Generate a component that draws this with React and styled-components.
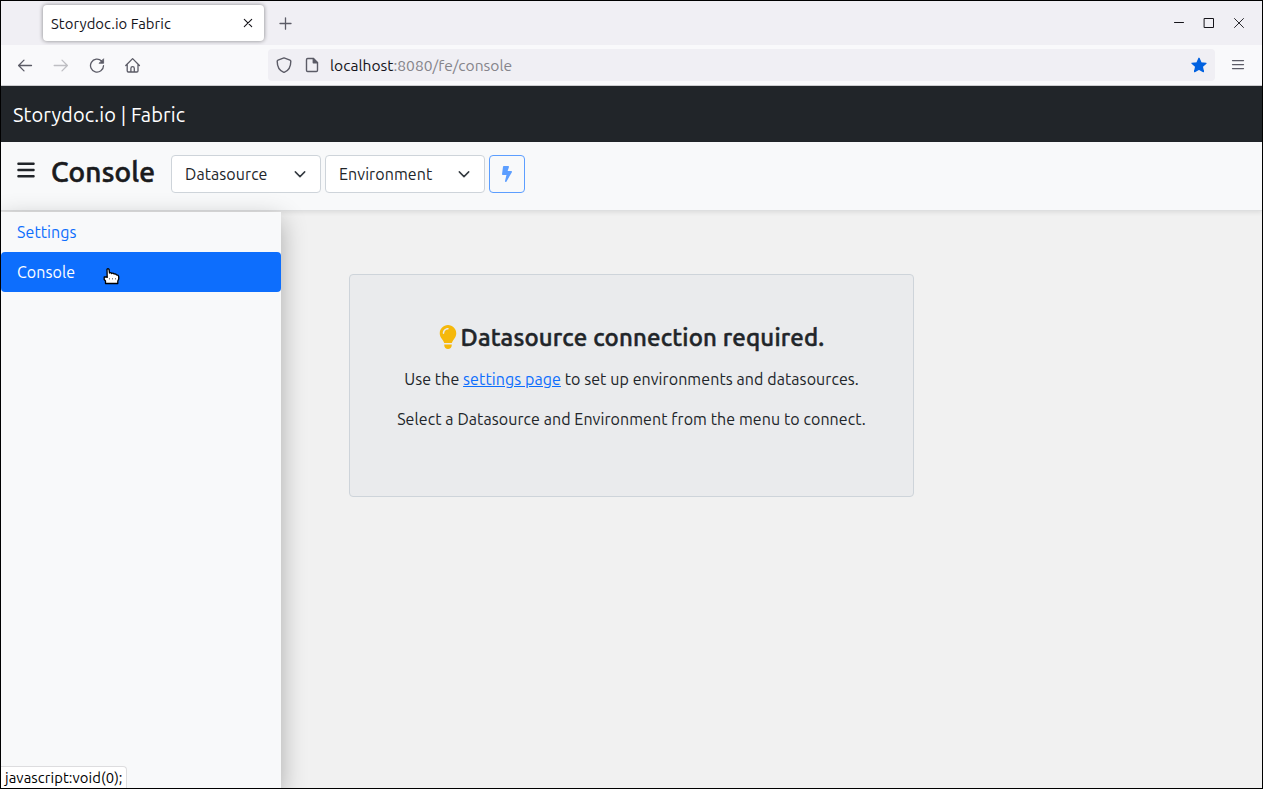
import React from "react";
import styled, { createGlobalStyle } from "styled-components";
import { FaBars, FaLightbulb } from "react-icons/fa6";
import { FaBolt } from "react-icons/fa";

const GlobalStyle = createGlobalStyle`
  *, *::before, *::after { box-sizing: border-box; }
  body {
    margin: 0;
    font-family: Ubuntu, "Noto Sans", "Open Sans", sans-serif;
    font-size: 16px;
    line-height: 24px;
    letter-spacing: 0.08px;
    color: #212529;
  }
  h1, h2, p { margin: 0; }
  button { font: inherit; letter-spacing: inherit; color: inherit; }
`;

const Window = styled.div`
  width: 1263px;
  height: 789px;
  display: flex;
  flex-direction: column;
  position: relative;
  overflow: hidden;
  border: 1px solid #000;
  background: #f1f1f1;
`;

const TabStrip = styled.div`
  height: 44px;
  flex: none;
  display: flex;
  align-items: center;
  padding: 0 17px 0 42px;
  background: #f0eff4;
`;

const Tab = styled.div`
  width: 221px;
  height: 36px;
  display: flex;
  align-items: center;
  justify-content: space-between;
  padding: 0 11px 0 8px;
  border-radius: 4px;
  background: #fff;
  box-shadow: 0 0 4px rgba(0, 0, 0, 0.45);
  color: #15141a;
  font-size: 14.8px;
`;

const TabLabel = styled.span`
  padding-top: 2px;
`;

const NewTab = styled.div`
  display: flex;
  margin-left: 14px;
`;

const WindowControls = styled.div`
  display: flex;
  gap: 18px;
  margin-left: auto;
`;

const NavBar = styled.div`
  height: 41px;
  flex: none;
  display: flex;
  align-items: center;
  padding: 0 16px;
  border-bottom: 1px solid #cccccf;
  background: #f9f9fb;
`;

const NavButtons = styled.div`
  width: 251px;
  display: flex;
  gap: 20px;
`;

const AddressBar = styled.div`
  width: 947px;
  height: 32px;
  display: flex;
  align-items: center;
  padding: 0 8px;
  border-radius: 4px;
  background: #f0eff4;
`;

const Url = styled.span`
  margin-left: 10px;
  color: #85848a;
  font-size: 15.6px;
  letter-spacing: 0;
`;

const Host = styled.span`
  color: #15141a;
`;

const Icon = styled.svg`
  display: block;
  flex: none;
  fill: none;
  stroke: ${(p) => p.$color || "#5b5b66"};
  stroke-width: ${(p) => p.$weight || 1.3};
  stroke-linecap: round;
  stroke-linejoin: round;
  margin-left: ${(p) => p.$left || 0}px;
`;

const BookmarkStar = styled(Icon)`
  margin-left: auto;
`;

const Brand = styled.div`
  height: 56px;
  flex: none;
  padding: 14px 12px 12px;
  background: #212529;
  color: #fff;
  font-size: 20px;
  line-height: 30px;
  letter-spacing: 0.1px;
`;

const PageHeader = styled.header`
  height: 69px;
  flex: none;
  display: flex;
  align-items: flex-start;
  padding: 13px 16px 0;
  border-bottom: 1px solid #dedfe0;
  background: #f8f9fa;
  box-shadow: 0 2px 4px rgba(0, 0, 0, 0.075);
`;

const MenuIcon = styled(FaBars)`
  width: 18px;
  height: 20px;
  margin: 5px 16px 0 0;
`;

const Title = styled.h1`
  width: 104px;
  margin-right: 16px;
  color: #1a1b1d;
  font-size: 28px;
  font-weight: 500;
  line-height: 34px;
  letter-spacing: 0.2px;
  white-space: nowrap;
  -webkit-text-stroke: 0.6px currentColor;
`;

const Select = styled.button`
  width: ${(p) => p.$width}px;
  height: 38px;
  display: flex;
  align-items: center;
  justify-content: space-between;
  margin-right: 4px;
  padding: 0 13px;
  border: 1px solid #ced4da;
  border-radius: 4px;
  background: #fff;
`;

const ConnectButton = styled.button`
  width: 36px;
  height: 38px;
  display: flex;
  align-items: center;
  justify-content: center;
  padding: 0;
  border: 1px solid #5c9eff;
  border-radius: 4px;
  background: transparent;
  color: #5c9eff;
`;

const Body = styled.div`
  flex: 1;
  display: flex;
  min-height: 0;
  padding-top: 1px;
`;

const Sidebar = styled.nav`
  width: 280px;
  flex: none;
  background: #f8f9fa;
  box-shadow: 0 8px 24px rgba(0, 0, 0, 0.3);
`;

const NavItem = styled.a`
  height: 40px;
  display: block;
  padding: 8px 16px;
  border-radius: 4px;
  background: ${(p) => (p.$active ? "#0d6efd" : "transparent")};
  color: ${(p) => (p.$active ? "#fff" : "#0d6efd")};
`;

const Content = styled.main`
  flex: 1;
  padding: 62px 68px;
`;

const Notice = styled.section`
  width: 565px;
  height: 223px;
  padding: 47px 0;
  border: 1px solid #ced4da;
  border-radius: 4px;
  background: #eaebed;
  text-align: center;
  white-space: nowrap;
`;

const NoticeTitle = styled.h2`
  display: flex;
  align-items: center;
  justify-content: center;
  gap: 4px;
  margin-bottom: 13px;
  font-size: 24px;
  font-weight: 500;
  line-height: 32px;
  letter-spacing: 0.18px;
  -webkit-text-stroke: 0.5px currentColor;
`;

const Bulb = styled(FaLightbulb)`
  width: 18px;
  height: 24px;
  margin-bottom: 2px;
  color: #f5b80b;
`;

const NoticeText = styled.p`
  margin-bottom: 16px;
`;

const Link = styled.a`
  color: #0d6efd;
  text-decoration: underline;
`;

const StatusBar = styled.div`
  position: absolute;
  left: 0;
  bottom: 0;
  width: 126px;
  height: 22px;
  padding: 0 4px;
  border: 1px solid #dddddf;
  border-left: 0;
  border-bottom: 0;
  border-radius: 0 4px 0 0;
  background: #fff;
  color: #000;
  font-size: 14.8px;
  line-height: 22px;
`;

const Pointer = styled.svg`
  position: absolute;
  left: 102px;
  top: 266px;
`;

const Chevron = () => (
  <Icon width="14" height="14" viewBox="0 0 14 14" $color="#343a40" $weight={1.5}>
    <path d="M2.3 4.900l4.700 4.700 4.700-4.700" />
  </Icon>
);

export default function App() {
  return (
    <Window>
      <GlobalStyle />
      <TabStrip>
        <Tab>
          <TabLabel>Storydoc.io Fabric</TabLabel>
          <Icon width="10" height="10" viewBox="0 0 10 10" $color="#15141a" $weight={1.1}>
            <path d="M1.3 1.3l7.4 7.4M8.7 1.3L1.3 8.7" />
          </Icon>
        </Tab>
        <NewTab>
          <Icon width="14" height="14" viewBox="0 0 14 14" $color="#5b5b66">
            <path d="M2 7.5h11M7.5 1.8v11.4" />
          </Icon>
        </NewTab>
        <WindowControls>
          <Icon width="12" height="12" viewBox="0 0 12 12" $color="#15141a" $weight={1}>
            <path d="M1.5 5.5h9" />
          </Icon>
          <Icon width="12" height="12" viewBox="0 0 12 12" $color="#15141a" $weight={1}>
            <path d="M1.5 1.5h9v9h-9z" />
          </Icon>
          <Icon width="12" height="12" viewBox="0 0 12 12" $color="#15141a" $weight={0.9}>
            <path d="M1.5 1.5l9 9M10.5 1.5l-9 9" />
          </Icon>
        </WindowControls>
      </TabStrip>
      <NavBar>
        <NavButtons>
          <Icon width="16" height="16" viewBox="0 0 16 16">
            <path d="M14.500 8.500H1.800M7 3.100L1.600 8.500 7 13.900" />
          </Icon>
          <Icon width="16" height="16" viewBox="0 0 16 16" $color="#bebec3">
            <path d="M1.200 8.500h13.200M9 3.100l5.400 5.400L9 13.900" />
          </Icon>
          <Icon width="16" height="16" viewBox="0 0 16 16">
            <path d="M12.600 4A6.500 6.500 0 1 0 14.500 8.700" />
            <path d="M14.600 2.100v4.200h-4.200z" fill="#5b5b66" strokeWidth="0.8" />
          </Icon>
          <Icon width="16" height="16" viewBox="0 0 16 16">
            <path d="M.8 8.500L7.600 1.600l6.800 6.900M2.200 7.200v6.600c0 .7.5 1.200 1.200 1.200h8.400c.7 0 1.200-.5 1.200-1.200V7.200M5.900 14.800v-3.400c0-1.100.7-1.800 1.700-1.800s1.700.7 1.700 1.800v3.400" />
          </Icon>
        </NavButtons>
        <AddressBar>
          <Icon width="16" height="16" viewBox="0 0 16 16" $weight={1.4}>
            <path d="M8 .9l6 2.3c.5.2.8.5.8 1 0 5.200-1.700 9-6.200 10.900a1.500 1.500 0 0 1-1.200 0C2.900 13.200 1.200 9.400 1.200 4.200c0-.5.3-.8.8-1z" />
          </Icon>
          <Icon width="16" height="16" viewBox="0 0 16 16" $left={12} $weight={1.4}>
            <path d="M9.300 1.500H3.700c-.7 0-1.200.5-1.200 1.200v10.600c0 .7.5 1.200 1.200 1.200h8.600c.7 0 1.200-.5 1.200-1.200V5.700z" />
            <path d="M9.300 1.500v4.200h4.200z" fill="#5b5b66" />
          </Icon>
          <Url>
            <Host>localhost</Host>:8080/fe/console
          </Url>
          <BookmarkStar width="16" height="16" viewBox="0 0 16 16" $color="#0061e0">
            <path
              d="M8 1.300l2 4.500 5 .5-3.700 3.300 1.100 5L8 12.100l-4.400 2.500 1.100-5L1 6.300l5-.5z"
              fill="#0061e0"
            />
          </BookmarkStar>
        </AddressBar>
        <Icon width="14" height="14" viewBox="0 0 14 14" $left={16}>
          <path d="M1.500 2.600h11M1.500 6.600h11M1.500 10.600h11" />
        </Icon>
      </NavBar>
      <Brand>Storydoc.io | Fabric</Brand>
      <PageHeader>
        <MenuIcon />
        <Title>Console</Title>
        <Select $width={150}>
          <span>Datasource</span>
          <Chevron />
        </Select>
        <Select $width={160}>
          <span>Environment</span>
          <Chevron />
        </Select>
        <ConnectButton>
          <FaBolt size={16} />
        </ConnectButton>
      </PageHeader>
      <Body>
        <Sidebar>
          <NavItem>Settings</NavItem>
          <NavItem $active>Console</NavItem>
        </Sidebar>
        <Content>
          <Notice>
            <NoticeTitle>
              <Bulb />
              <span>Datasource connection required.</span>
            </NoticeTitle>
            <NoticeText>
              Use the <Link>settings page</Link> to set up environments and datasources.
            </NoticeText>
            <NoticeText>Select a Datasource and Environment from the menu to connect.</NoticeText>
          </Notice>
        </Content>
      </Body>
      <StatusBar>javascript:void(0);</StatusBar>
      <Pointer width="18" height="18" viewBox="0 0 18 18">
        <path
          d="M4 2.200Q5 1.300 6 2.200L6.500 6Q7.700 5.200 8.700 6.500Q10 5.500 11.200 7Q12.600 6.400 13.500 7.900Q15.500 8 15.700 9.500V12L14.800 14V16.500H2.500V14L1.200 12.500V10H3.200L4.200 10.400Z"
          fill="#fff"
          stroke="#000"
          strokeWidth="1.300"
          strokeLinejoin="round"
        />
        <path d="M6.500 11v1.500M9.500 11v1.500M12.500 11v1.500" stroke="#888" fill="none" />
      </Pointer>
    </Window>
  );
}
